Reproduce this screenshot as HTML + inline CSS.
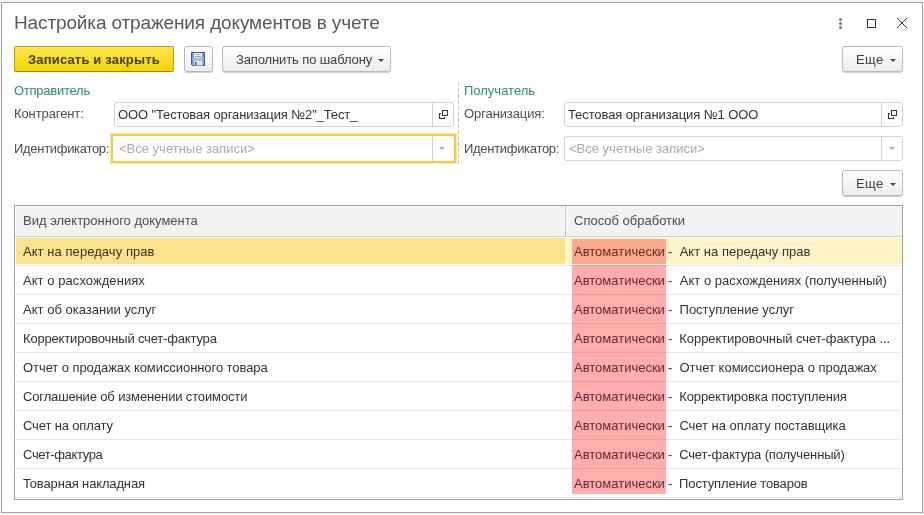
<!DOCTYPE html>
<html><head><meta charset="utf-8">
<style>
*{box-sizing:border-box;margin:0;padding:0}
html,body{width:924px;height:515px;overflow:hidden;background:#f6f6f6;font-family:"Liberation Sans",sans-serif;font-size:13px;color:#4d4d4d}
.abs{position:absolute}
#win{position:absolute;left:1px;top:2px;width:922px;height:511px;border:1px solid #a4a4a4;background:#fff}
.t{position:absolute;white-space:nowrap;line-height:1;will-change:transform}
.btn{position:absolute;border:1px solid #b8b8b8;border-radius:3px;background:linear-gradient(#fff,#ececec);box-shadow:0 1px 0 #d0d0d0}
.fld{position:absolute;border:1px solid #d2d2d2;border-radius:3px;background:#fff}
.sep{position:absolute;top:0;bottom:0;width:1px;background:#cfcfcf}
.arr{position:absolute;width:0;height:0;border-left:3px solid transparent;border-right:3px solid transparent;border-top:3px solid #444}
.row{position:absolute;left:15px;width:887px;height:29px;border-bottom:1px solid #e2e2e2}
</style></head><body>
<div id="win"></div>

<!-- title -->
<div class="t" style="left:14px;top:13px;font-size:19px;letter-spacing:-0.13px;color:#595959">Настройка отражения документов в учете</div>

<!-- title icons -->
<div class="abs" style="left:839px;top:18px;width:3px;height:3px;border-radius:50%;background:#777"></div>
<div class="abs" style="left:839px;top:22px;width:3px;height:3px;border-radius:50%;background:#777"></div>
<div class="abs" style="left:839px;top:26px;width:3px;height:3px;border-radius:50%;background:#777"></div>
<div class="abs" style="left:867px;top:19px;width:9px;height:9px;border:1.5px solid #333"></div>
<svg class="abs" style="left:896px;top:17px" width="12" height="12" viewBox="0 0 12 12"><path d="M1 1L11 11M11 1L1 11" stroke="#333" stroke-width="1"/></svg>

<!-- buttons -->
<div class="abs" style="left:14px;top:46px;width:160px;height:26px;border:1px solid #b89c10;border-bottom-color:#9c8508;border-radius:2px;background:linear-gradient(#ffe650,#f3d400)"></div>
<div class="t" style="left:28px;top:53px;font-weight:bold;letter-spacing:0.17px;color:#433f22">Записать и закрыть</div>

<div class="btn" style="left:184px;top:46px;width:29px;height:26px"></div>
<svg class="abs" style="left:191px;top:52px" width="14" height="14" viewBox="0 0 14 14">
<defs><linearGradient id="fg" x1="0" x2="1"><stop offset="0" stop-color="#6d95c8"/><stop offset="0.5" stop-color="#94b8e4"/><stop offset="1" stop-color="#6d95c8"/></linearGradient></defs>
<path d="M0.5 0.5H13.5V13.5H1.5L0.5 12.5Z" fill="url(#fg)" stroke="#435a7a"/>
<rect x="1" y="6.3" width="12" height="1.4" fill="#b4d0f0" opacity="0.7"/>
<rect x="3" y="1" width="8" height="4.7" fill="#fbfdff"/>
<rect x="4" y="2.2" width="6" height="0.9" fill="#8d96a3"/>
<rect x="4" y="4.1" width="6" height="0.9" fill="#8d96a3"/>
<rect x="3" y="8.6" width="8.5" height="4.9" fill="#dfe5ec"/>
<rect x="4" y="10" width="1.6" height="3" fill="#4a5a70"/>
</svg>

<div class="btn" style="left:222px;top:46px;width:169px;height:26px"></div>
<div class="t" style="left:236px;top:53px;color:#404040;letter-spacing:-0.12px">Заполнить по шаблону</div>
<div class="arr" style="left:378px;top:59px"></div>

<div class="btn" style="left:842px;top:46px;width:61px;height:26px"></div>
<div class="t" style="left:856px;top:53px;color:#404040;letter-spacing:0.4px">Еще</div>
<div class="arr" style="left:890px;top:59px"></div>

<!-- groups -->
<div class="t" style="left:14px;top:84px;color:#2f8f66;letter-spacing:-0.25px">Отправитель</div>
<div class="t" style="left:464px;top:84px;color:#2f8f66">Получатель</div>
<div class="abs" style="left:458px;top:82px;width:1px;height:83px;background:repeating-linear-gradient(to bottom,#c6c6c6 0 4px,transparent 4px 6px)"></div>

<div class="t" style="left:14px;top:107px;letter-spacing:-0.1px">Контрагент:</div>
<div class="fld" style="left:114px;top:102px;width:340px;height:25px"><div class="sep" style="left:317px"></div></div>
<div class="t" style="left:118px;top:108px;color:#333;letter-spacing:-0.12px">ООО "Тестовая организация №2"_Тест_</div>
<svg class="abs" style="left:438px;top:108px" width="12" height="12" viewBox="0 0 12 12"><path d="M4.5 2.5H9.5V7.5H4.5Z M3 5.5H1.5V10.5H6.5V9" fill="none" stroke="#3a3a3a" stroke-width="1.15"/></svg>

<div class="t" style="left:14px;top:142px;letter-spacing:-0.3px">Идентификатор:</div>
<div class="abs" style="left:111px;top:134px;width:345px;height:29px;border:2px solid #edce47;box-shadow:0 0 0 1px rgba(240,212,80,0.5)"></div>
<div class="sep" style="left:432px;top:136px;height:25px;bottom:auto"></div>
<div class="t" style="left:119px;top:142px;color:#aaa">&lt;Все учетные записи&gt;</div>
<div class="arr" style="left:439px;top:147px;border-top-color:#aaa"></div>

<div class="t" style="left:464px;top:107px;letter-spacing:-0.1px">Организация:</div>
<div class="fld" style="left:564px;top:102px;width:339px;height:25px"><div class="sep" style="left:316px"></div></div>
<div class="t" style="left:568px;top:108px;color:#333;letter-spacing:-0.1px">Тестовая организация №1 ООО</div>
<svg class="abs" style="left:887px;top:108px" width="12" height="12" viewBox="0 0 12 12"><path d="M4.5 2.5H9.5V7.5H4.5Z M3 5.5H1.5V10.5H6.5V9" fill="none" stroke="#3a3a3a" stroke-width="1.15"/></svg>

<div class="t" style="left:464px;top:142px;letter-spacing:-0.3px">Идентификатор:</div>
<div class="fld" style="left:564px;top:136px;width:339px;height:25px"><div class="sep" style="left:316px"></div></div>
<div class="t" style="left:569px;top:142px;color:#aaa">&lt;Все учетные записи&gt;</div>
<div class="arr" style="left:889px;top:147px;border-top-color:#aaa"></div>

<div class="btn" style="left:842px;top:170px;width:61px;height:26px"></div>
<div class="t" style="left:856px;top:177px;color:#404040;letter-spacing:0.4px">Еще</div>
<div class="arr" style="left:890px;top:183px"></div>

<!-- table -->
<div class="abs" style="left:14px;top:205px;width:889px;height:295px;border:1px solid #a4a4a4;background:#fff"></div>
<div class="abs" style="left:16px;top:206px;width:886px;height:30px;background:#f2f2f2"></div><div class="abs" style="left:15px;top:236px;width:887px;height:1px;background:#d0d0d0"></div>
<div class="abs" style="left:564px;top:206px;width:3px;height:30px;background:#fff;border-left:0"></div><div class="abs" style="left:565px;top:206px;width:1px;height:30px;background:#bdbdbd"></div>
<div class="t" style="left:23px;top:214px">Вид электронного документа</div>
<div class="t" style="left:574px;top:214px">Способ обработки</div>

<!--ROWS-->
<div class="abs" style="left:16px;top:238px;width:549px;height:26px;background:#fde28c"></div>
<div class="abs" style="left:565px;top:238px;width:337px;height:26px;background:#fff4c8"></div>
<div class="abs" style="left:572px;top:239px;width:94px;height:25px;background:#ffa98a"></div>
<div class="t" style="left:23px;top:245px;color:#333;letter-spacing:0.058px">Акт на передачу прав</div>
<div class="t" style="left:574px;top:245px;color:#6a2830">Автоматически</div><div class="t" style="left:668px;top:245px;color:#333;letter-spacing:0.027px">-&nbsp; Акт на передачу прав</div>
<div class="abs" style="left:572px;top:265px;width:94px;height:30px;background:#ffadad"></div>
<div class="t" style="left:23px;top:274px;color:#333;letter-spacing:0.059px">Акт о расхождениях</div>
<div class="t" style="left:574px;top:274px;color:#6a2830">Автоматически</div><div class="t" style="left:668px;top:274px;color:#333;letter-spacing:0.039px">-&nbsp; Акт о расхождениях (полученный)</div>
<div class="abs" style="left:572px;top:294px;width:94px;height:30px;background:#ffadad"></div>
<div class="t" style="left:23px;top:303px;color:#333;letter-spacing:0.020px">Акт об оказании услуг</div>
<div class="t" style="left:574px;top:303px;color:#6a2830">Автоматически</div><div class="t" style="left:668px;top:303px;color:#333;letter-spacing:-0.005px">-&nbsp; Поступление услуг</div>
<div class="abs" style="left:572px;top:323px;width:94px;height:30px;background:#ffadad"></div>
<div class="t" style="left:23px;top:332px;color:#333;letter-spacing:-0.175px">Корректировочный счет-фактура</div>
<div class="t" style="left:574px;top:332px;color:#6a2830">Автоматически</div><div class="t" style="left:668px;top:332px;color:#333;letter-spacing:-0.074px">-&nbsp; Корректировочный счет-фактура ...</div>
<div class="abs" style="left:572px;top:352px;width:94px;height:30px;background:#ffadad"></div>
<div class="t" style="left:23px;top:361px;color:#333;letter-spacing:-0.069px">Отчет о продажах комиссионного товара</div>
<div class="t" style="left:574px;top:361px;color:#6a2830">Автоматически</div><div class="t" style="left:668px;top:361px;color:#333;letter-spacing:-0.016px">-&nbsp; Отчет комиссионера о продажах</div>
<div class="abs" style="left:572px;top:381px;width:94px;height:30px;background:#ffadad"></div>
<div class="t" style="left:23px;top:390px;color:#333;letter-spacing:-0.141px">Соглашение об изменении стоимости</div>
<div class="t" style="left:574px;top:390px;color:#6a2830">Автоматически</div><div class="t" style="left:668px;top:390px;color:#333;letter-spacing:-0.115px">-&nbsp; Корректировка поступления</div>
<div class="abs" style="left:572px;top:410px;width:94px;height:30px;background:#ffadad"></div>
<div class="t" style="left:23px;top:419px;color:#333;letter-spacing:-0.146px">Счет на оплату</div>
<div class="t" style="left:574px;top:419px;color:#6a2830">Автоматически</div><div class="t" style="left:668px;top:419px;color:#333;letter-spacing:-0.044px">-&nbsp; Счет на оплату поставщика</div>
<div class="abs" style="left:572px;top:439px;width:94px;height:30px;background:#ffadad"></div>
<div class="t" style="left:23px;top:448px;color:#333;letter-spacing:-0.364px">Счет-фактура</div>
<div class="t" style="left:574px;top:448px;color:#6a2830">Автоматически</div><div class="t" style="left:668px;top:448px;color:#333;letter-spacing:-0.141px">-&nbsp; Счет-фактура (полученный)</div>
<div class="abs" style="left:572px;top:468px;width:94px;height:26px;background:#ffadad"></div>
<div class="t" style="left:23px;top:477px;color:#333;letter-spacing:-0.147px">Товарная накладная</div>
<div class="t" style="left:574px;top:477px;color:#6a2830">Автоматически</div><div class="t" style="left:668px;top:477px;color:#333;letter-spacing:-0.143px">-&nbsp; Поступление товаров</div>
<div class="abs" style="left:15px;top:265px;width:887px;height:1px;background:rgba(0,0,0,0.095)"></div>
<div class="abs" style="left:15px;top:294px;width:887px;height:1px;background:rgba(0,0,0,0.095)"></div>
<div class="abs" style="left:15px;top:323px;width:887px;height:1px;background:rgba(0,0,0,0.095)"></div>
<div class="abs" style="left:15px;top:352px;width:887px;height:1px;background:rgba(0,0,0,0.095)"></div>
<div class="abs" style="left:15px;top:381px;width:887px;height:1px;background:rgba(0,0,0,0.095)"></div>
<div class="abs" style="left:15px;top:410px;width:887px;height:1px;background:rgba(0,0,0,0.095)"></div>
<div class="abs" style="left:15px;top:439px;width:887px;height:1px;background:rgba(0,0,0,0.095)"></div>
<div class="abs" style="left:15px;top:468px;width:887px;height:1px;background:rgba(0,0,0,0.095)"></div>
<div class="abs" style="left:15px;top:497px;width:887px;height:1px;background:rgba(0,0,0,0.095)"></div>
<!--/ROWS-->
</body></html>
